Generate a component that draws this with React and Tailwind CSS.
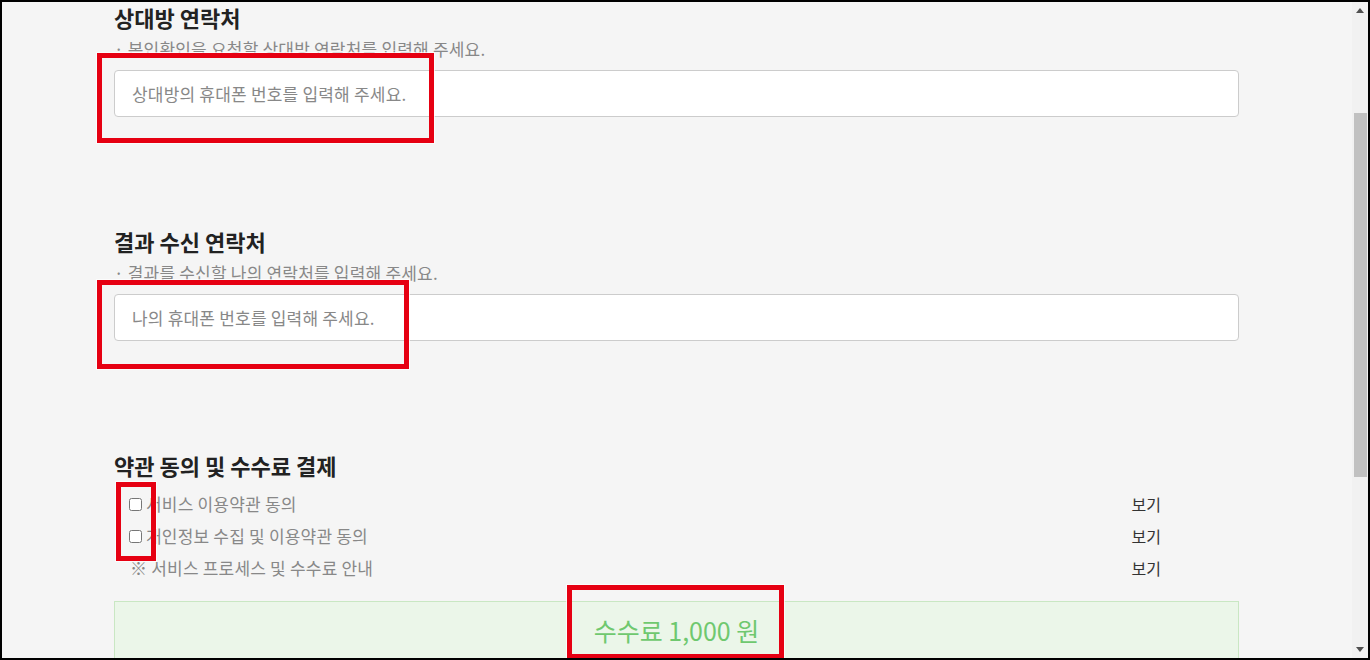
import React from "react";

const Section = ({ title, desc, placeholder }) => (
  <div>
    <h3 className="text-[22px] leading-[28px] font-bold text-[#222]">{title}</h3>
    <p className="mt-2 text-[17px] leading-[20px] tracking-[0.2px] text-[#888]">{desc}</p>
    <input
      type="text"
      placeholder={placeholder}
      className="mt-[11px] block w-full h-[47px] px-[17px] bg-white border border-[#ccc] rounded-[4px] text-[17px] tracking-[0.2px] placeholder:text-[#888] focus:outline-none"
    />
  </div>
);

const AgreeRow = ({ label, checkbox }) => (
  <div className="flex items-center h-[32px]">
    {checkbox ? (
      <>
        <input type="checkbox" className="ml-[15px] w-[13px] h-[13px] m-0" />
        <span className="ml-[4px] text-[17px] tracking-[0.2px] text-[#888]">{label}</span>
      </>
    ) : (
      <span className="ml-[16px] text-[17px] tracking-[0.2px] text-[#888]">{label}</span>
    )}
    <span className="ml-auto mr-[78px] text-[16px] text-[#333]">보기</span>
  </div>
);

const RedBox = ({ className }) => (
  <div className={`absolute border-[5px] border-[#e60012] outline outline-1 outline-white/70 pointer-events-none ${className}`}></div>
);

const App = () => {
  return (
    <div className="w-[1370px] h-[660px] border-2 border-black bg-[#f5f5f5] flex overflow-hidden relative font-['Noto_Sans_CJK_KR','Noto_Sans',sans-serif]">
      <div className="flex-1">
        <div className="ml-[112px] w-[1125px] pt-px">
          <Section
            title="상대방 연락처"
            desc="· 본인확인을 요청할 상대방 연락처를 입력해 주세요."
            placeholder="상대방의 휴대폰 번호를 입력해 주세요."
          />
          <div className="mt-[110px]">
            <Section
              title="결과 수신 연락처"
              desc="· 결과를 수신할 나의 연락처를 입력해 주세요."
              placeholder="나의 휴대폰 번호를 입력해 주세요."
            />
          </div>
          <div className="mt-[110px]">
            <h3 className="text-[22px] leading-[28px] font-bold text-[#222]">약관 동의 및 수수료 결제</h3>
            <div className="mt-[9px]">
              <AgreeRow checkbox label="서비스 이용약관 동의" />
              <AgreeRow checkbox label="개인정보 수집 및 이용약관 동의" />
              <AgreeRow label="※ 서비스 프로세스 및 수수료 안내" />
            </div>
            <div className="mt-[17px] h-[80px] bg-[#ebf6e9] border border-[#c9e7c3] flex justify-center pt-[12px]">
              <span className="text-[25px] leading-[32px] text-[#6fc86f]">수수료 1,000 원</span>
            </div>
          </div>
        </div>
      </div>

      <div className="w-[16px] bg-[#f1f1f1] flex flex-col items-center">
        <div className="h-[17px] flex items-center justify-center">
          <svg width="8" height="5" viewBox="0 0 8 5">
            <polygon points="0,5 8,5 4,0" fill="#505050" />
          </svg>
        </div>
        <div className="mt-[94px] w-[13px] h-[364px] bg-[#c1c1c1]"></div>
        <div className="mt-auto h-[17px] flex items-center justify-center">
          <svg width="8" height="5" viewBox="0 0 8 5">
            <polygon points="0,0 8,0 4,5" fill="#505050" />
          </svg>
        </div>
      </div>

      <RedBox className="left-[95px] top-[51px] w-[337px] h-[90px]" />
      <RedBox className="left-[95px] top-[278px] w-[312px] h-[89px]" />
      <RedBox className="left-[114px] top-[480px] w-[40px] h-[79px]" />
      <RedBox className="left-[565px] top-[583px] w-[217px] h-[74px]" />
    </div>
  );
};

export default App;
